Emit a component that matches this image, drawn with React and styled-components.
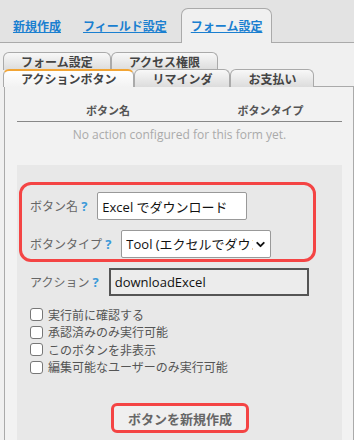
import styled, { createGlobalStyle, css } from "styled-components";
import { ChevronDown } from "lucide-react";

const GlobalStyle = createGlobalStyle`
  body {
    margin: 0;
    background: #f0f0f0;
    font-family: "Open Sans", "Noto Sans CJK JP", sans-serif;
  }
`;

const checks = [
  "実行前に確認する",
  "承認済みのみ実行可能",
  "このボタンを非表示",
  "編集可能なユーザーのみ実行可能",
];

const App = () => {
  return (
    <>
      <GlobalStyle />
      <TopBar>
        <TopTab href="#">新規作成</TopTab>
        <TopTab href="#">フィールド設定</TopTab>
        <TopTab href="#" $active>
          フォーム設定
        </TopTab>
      </TopBar>

      <SubTabs>
        <SubTabRow>
          <SubTab>フォーム設定</SubTab>
          <SubTab>アクセス権限</SubTab>
        </SubTabRow>
        <SubTabRow>
          <SubTab $active>アクションボタン</SubTab>
          <SubTab>リマインダ</SubTab>
          <SubTab>お支払い</SubTab>
        </SubTabRow>
      </SubTabs>

      <Panel>
        <TableHead>
          <span>ボタン名</span>
          <span>ボタンタイプ</span>
        </TableHead>
        <Empty>No action configured for this form yet.</Empty>

        <FormBox>
          <Highlight>
            <FieldRow>
              <Label>
                ボタン名 <Help>?</Help>
              </Label>
              <TextInput defaultValue="Excel でダウンロード" />
            </FieldRow>
            <FieldRow>
              <Label>
                ボタンタイプ <Help>?</Help>
              </Label>
              <SelectWrap>
                <Select defaultValue="excel">
                  <option value="excel">Tool (エクセルでダウンロード)</option>
                </Select>
                <Chevron size={13} strokeWidth={3.5} />
              </SelectWrap>
            </FieldRow>
          </Highlight>

          <FieldRow $gapTop>
            <Label>
              アクション <Help>?</Help>
            </Label>
            <ActionInput defaultValue="downloadExcel" readOnly />
          </FieldRow>

          <CheckList>
            {checks.map((c) => (
              <CheckRow key={c}>
                <CheckBox type="checkbox" />
                {c}
              </CheckRow>
            ))}
          </CheckList>

          <ButtonRow>
            <CreateButton>ボタンを新規作成</CreateButton>
          </ButtonRow>
        </FormBox>
      </Panel>
    </>
  );
};

export default App;

const TopBar = styled.div`
  height: 42px;
  background: #e3e3e3;
  border-bottom: 1px solid #aaa;
  display: flex;
  align-items: flex-end;
  gap: 2px;
  padding-left: 3px;
`;

const TopTab = styled.a`
  box-sizing: border-box;
  height: 35px;
  margin-bottom: -1px;
  padding: 0 9px;
  display: flex;
  align-items: center;
  border: 1px solid transparent;
  border-bottom: none;
  border-radius: 7px 7px 0 0;
  color: #1a7fd0;
  font-size: 12px;
  font-weight: bold;
  text-decoration: underline;
  ${(p) =>
    p.$active &&
    css`
      margin-left: 2px;
      border-color: #aaa;
      background: #f0f0f0;
    `}
`;

const SubTabs = styled.div`
  padding: 9px 0 0 3px;
`;

const SubTabRow = styled.div`
  display: flex;
  & + & {
    margin-top: -1px;
  }
`;

const SubTab = styled.div`
  box-sizing: border-box;
  height: 18px;
  padding: 0 17px;
  display: flex;
  align-items: center;
  border: 1px solid #aaa;
  border-bottom: none;
  border-radius: 6px 6px 0 0;
  background: linear-gradient(#f8f8f8, #dcdcdc);
  color: #444;
  font-size: 12px;
  font-weight: bold;
  ${(p) =>
    p.$active &&
    css`
      position: relative;
      z-index: 1;
      border-top: 2px solid #f2a535;
      background: linear-gradient(#ffffff, #f2f2f2);
    `}
`;

const Panel = styled.div`
  margin: -1px 0 0 4px;
  border: 1px solid #aaa;
  border-bottom: none;
  background: #f2f2f2;
  padding: 12px 11px 0 12px;
`;

const TableHead = styled.div`
  display: grid;
  grid-template-columns: 182px 1fr;
  align-items: center;
  height: 22px;
  border-bottom: 1px solid #888;
  color: #555;
  font-size: 11px;
  font-weight: bold;
  text-align: center;
`;

const Empty = styled.div`
  line-height: 26px;
  color: #aaa;
  font-size: 12px;
  text-align: center;
`;

const FormBox = styled.div`
  margin-top: 17px;
  padding: 17px 12px 40px 13px;
  background: #e8e8e8;
`;

const Highlight = styled.div`
  margin: 0 14px 0 -11px;
  padding: 7px 8px 1px;
  border: 3px solid #f44444;
  border-radius: 12px;
  display: flex;
  flex-direction: column;
  gap: 10px;
`;

const FieldRow = styled.div`
  display: flex;
  align-items: center;
  gap: 10px;
  ${(p) =>
    p.$gapTop &&
    css`
      margin-top: 6px;
    `}
`;

const Label = styled.label`
  color: #666;
  font-size: 12px;
`;

const Help = styled.span`
  color: #3b9ad9;
  font-size: 13px;
  font-weight: bold;
`;

const fieldBase = css`
  box-sizing: border-box;
  height: 28px;
  padding: 0 4px;
  font-family: "Open Sans", "Noto Sans CJK JP", sans-serif;
  font-size: 13px;
  color: #111;
  outline: none;
`;

const TextInput = styled.input`
  ${fieldBase}
  width: 150px;
  border: 1px solid #999;
  border-radius: 2px;
  background: #fff;
`;

const SelectWrap = styled.div`
  position: relative;
  display: flex;
`;

const Select = styled.select`
  ${fieldBase}
  width: 150px;
  padding-right: 17px;
  appearance: none;
  border: 1px solid #999;
  border-radius: 2px;
  background: #fff;
`;

const Chevron = styled(ChevronDown)`
  position: absolute;
  right: 4px;
  top: 8px;
  color: #111;
  pointer-events: none;
`;

const ActionInput = styled.input`
  ${fieldBase}
  width: 200px;
  border: 2px solid #555;
  background: #ececec;
`;

const CheckList = styled.div`
  margin-top: 10px;
  display: flex;
  flex-direction: column;
`;

const CheckRow = styled.label`
  display: flex;
  align-items: center;
  gap: 5px;
  height: 17.5px;
  color: #555;
  font-size: 12px;
`;

const CheckBox = styled.input`
  appearance: none;
  box-sizing: border-box;
  width: 13px;
  height: 13px;
  margin: 0;
  border: 1px solid #777;
  border-radius: 3px;
  background: #fff;
`;

const ButtonRow = styled.div`
  margin-top: 27px;
  display: flex;
  justify-content: center;
`;

const CreateButton = styled.button`
  box-sizing: border-box;
  height: 30px;
  padding: 0 14px;
  border: 3px solid #f44444;
  border-radius: 6px;
  background: #efefef;
  color: #666;
  font-family: "Open Sans", "Noto Sans CJK JP", sans-serif;
  font-size: 13px;
  font-weight: bold;
`;
